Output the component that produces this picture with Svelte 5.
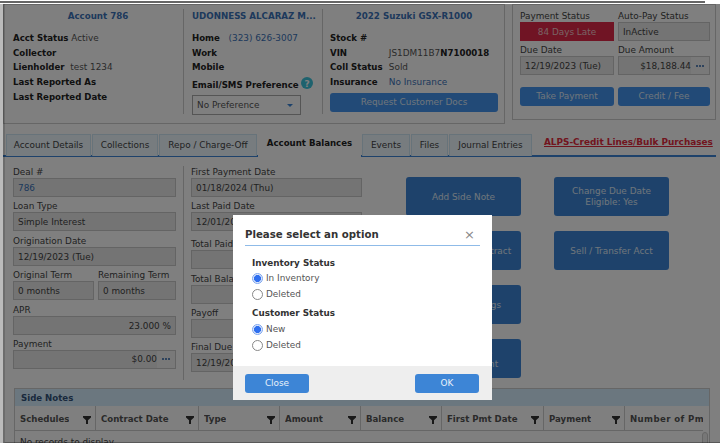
<script>
  const tabs = ['Account Details', 'Collections', 'Repo / Charge-Off', 'Account Balances', 'Events', 'Files', 'Journal Entries'];
  const cols = [
    ['Schedules', 81], ['Contract Date', 103], ['Type', 81], ['Amount', 81], ['Balance', 81],
    ['First Pmt Date', 102], ['Payment', 81], ['Number of Pmts', 78]
  ];
</script>

{#snippet dots()}
  <span class="dots"><i></i><i></i><i></i></span>
{/snippet}

<div class="page">
  <div class="topline"></div>
  <div class="top">
    <section class="summary">
      <div class="col c1">
        <h3>Account 786</h3>
        <p><b>Acct Status</b> <span class="dim">Active</span></p>
        <p><b>Collector</b></p>
        <p><b>Lienholder</b> <span class="dim">&nbsp;test 1234</span></p>
        <p><b>Last Reported As</b></p>
        <p><b>Last Reported Date</b></p>
      </div>
      <div class="col c2">
        <h3 class="left">UDONNESS ALCARAZ M...</h3>
        <p><b>Home</b> <span class="link phone">&nbsp;(323) 626-3007</span></p>
        <p><b>Work</b></p>
        <p><b>Mobile</b></p>
        <p class="pref"><b>Email/SMS Preference</b>
          <svg class="help" width="12" height="12" viewBox="0 0 12 12"><circle cx="6" cy="6" r="6" fill="#3dc4dc"/><text x="6" y="9.5" text-anchor="middle" font-size="9" font-weight="700" fill="#fff" font-family="DejaVu Sans">?</text></svg>
        </p>
        <div class="select">No Preference <span class="caret"></span></div>
      </div>
      <div class="col c3">
        <h3>2022 Suzuki GSX-R1000</h3>
        <p><b class="k">Stock #</b></p>
        <p><b class="k">VIN</b> <span class="dim">JS1DM11B7<b>N7100018</b></span></p>
        <p><b class="k">Coll Status</b> <span class="dim">Sold</span></p>
        <p><b class="k">Insurance</b> <span class="link">No Insurance</span></p>
        <div class="btn wide topbtn">Request Customer Docs</div>
      </div>
    </section>
    <section class="pay">
      <div class="paygrid">
        <div><label>Payment Status</label><div class="field red">84 Days Late</div></div>
        <div><label>Auto-Pay Status</label><div class="field">InActive</div></div>
        <div><label>Due Date</label><div class="field">12/19/2023 (Tue)</div></div>
        <div><label>Due Amount</label><div class="field right withdots"><span>$18,188.44</span>{@render dots()}</div></div>
      </div>
      <div class="paybtns">
        <div class="btn topbtn">Take Payment</div>
        <div class="btn topbtn">Credit / Fee</div>
      </div>
    </section>
  </div>

  <nav class="tabs">
    {#each tabs as t, i}
      <span class="tab t{i}" class:active={i === 3}>{t}</span>
    {/each}
    <a class="alps" href="#alps">ALPS-Credit Lines/Bulk Purchases</a>
  </nav>

  <div class="content">
    <div class="forms">
      <div class="fcol left">
        <div class="f"><label>Deal #</label><div class="field link">786</div></div>
        <div class="f"><label>Loan Type</label><div class="field">Simple Interest</div></div>
        <div class="f"><label>Origination Date</label><div class="field">12/19/2023 (Tue)</div></div>
        <div class="two">
          <div class="f"><label>Original Term</label><div class="field">0 months</div></div>
          <div class="f"><label>Remaining Term</label><div class="field">0 months</div></div>
        </div>
        <div class="f"><label>APR</label><div class="field right">23.000 %</div></div>
        <div class="f"><label>Payment</label><div class="field right withdots"><span>$0.00</span>{@render dots()}</div></div>
      </div>
      <div class="fcol mid">
        <div class="f"><label>First Payment Date</label><div class="field">01/18/2024 (Thu)</div></div>
        <div class="f"><label>Last Paid Date</label><div class="field">12/01/2023 (Fri)</div></div>
        <div class="f g"><label>Total Paid</label><div class="field"></div></div>
        <div class="f"><label>Total Balance</label><div class="field"></div></div>
        <div class="f"><label>Payoff</label><div class="field"></div></div>
        <div class="f"><label>Final Due Date</label><div class="field">12/19/2023 (Tue)</div></div>
      </div>
      <div class="actions">
        <div class="btn big">Add Side Note</div>
        <div class="btn big">Change Due Date<br />Eligible: Yes</div>
        <div class="btn big">View Signed Contract</div>
        <div class="btn big">Sell / Transfer Acct</div>
        <div class="btn big">Account Settings</div>
        <div class="spacer"></div>
        <div class="btn big">Add Late Fee<br />Fee Adjustment</div>
      </div>
    </div>

    <div class="notes">
      <div class="noteshead">Side Notes</div>
      <div class="gridhead">
        {#each cols as [name, w]}
          <div class="th" style="width:{w}px">
            <span>{name}</span>
            <svg width="8" height="8" viewBox="0 0 8 8"><path d="M0 0h8v1.6L5 4.2V8H3V4.2L0 1.6z" fill="#333"/></svg>
          </div>
        {/each}
      </div>
      <div class="norec">No records to display</div>
      <div class="scroll"></div>
    </div>
  </div>

  <div class="edge"></div>
  <div class="overlay"></div>

  <div class="modal">
    <div class="mbody">
      <div class="mtitle"><span>Please select an option</span><span class="x">×</span></div>
      <div class="opts">
        <h4>Inventory Status</h4>
        <div class="radio"><span class="r on"></span>In Inventory</div>
        <div class="radio"><span class="r"></span>Deleted</div>
        <h4 class="second">Customer Status</h4>
        <div class="radio"><span class="r on"></span>New</div>
        <div class="radio"><span class="r"></span>Deleted</div>
      </div>
    </div>
    <div class="mfoot">
      <div class="mbtn">Close</div>
      <div class="mbtn">OK</div>
    </div>
  </div>
</div>

<style>
  :global(body) { margin: 0; background: #fff; }
  .page {
    position: relative; width: 720px; height: 446px; overflow: hidden; box-sizing: border-box;
    background: #fff; color: #333; font: 8.9px/14.7px "DejaVu Sans", sans-serif; padding: 4px 4px 0 3px;
  }
  .page * { box-sizing: border-box; }
  b { font-size: 8.6px; }
  h3, h4, p { margin: 0; }
  label { display: block; color: #444; line-height: 12px; }
  .topline { position: absolute; left: 0; top: 1px; width: 705px; height: 2px; background: #666; z-index: 5; }

  .top { display: flex; gap: 7px; height: 120px; align-items: flex-start; }
  .summary { display: flex; width: 502px; height: 120px; border: 1px solid #ccc; padding: 4px 0 0; background: #fff; }
  .col { height: 105px; }
  .c1 { width: 180px; padding-left: 9px; border-right: 1px solid #ccc; }
  .c2 { width: 139px; padding-left: 8px; padding-right: 0; border-right: 1px solid #ccc; }
  .c3 { flex: 1; padding: 0 6px 0 7px; }
  h3 { color: #3a72b8; font-size: 8.7px; font-weight: 700; text-align: center; margin-bottom: 8px; line-height: 14px; }
  h3.left { text-align: left; white-space: nowrap; }
  .c1 b, .c2 b, .c3 b { color: #222; }
  p { white-space: nowrap; }
  .dim { color: #555; }
  .link, .field.link { color: #3a72b8; }
  .phone { margin-left: 3px; }
  .k { display: inline-block; width: 56px; }
  .pref { margin-top: 3px; display: flex; align-items: center; gap: 2px; }
  .help { flex: none; margin-top: -4px; }
  .select { margin-top: 2px; width: 109px; height: 20px; border: 1px solid #aaa; padding: 2px 4px; color: #555; position: relative; background: #fff; }
  .caret { position: absolute; right: 7px; top: 8px; border: 3px solid transparent; border-top-color: #3d85d6; border-bottom: 0; }
  .btn { background: #3d85d6; color: #dfeaf7; border-radius: 3px; display: flex; align-items: center; justify-content: center; text-align: center; }
  .btn.topbtn { background: #4494ee; }
  .wide { height: 19px; margin-top: 3px; }

  .pay { width: 204px; height: 116px; border: 1px solid #ccc; padding: 5px 5px 0 7px; background: #fff; }
  .paygrid { display: grid; grid-template-columns: 94px 92px; gap: 3px 4px; }
  .field { height: 19px; border: 1px solid #c8c8c8; background: #e8e8e8; color: #444; padding: 2px 4px; line-height: 14px; white-space: nowrap; overflow: hidden; }
  .field.red { background: #e02848; border-color: #e02848; color: #f3c6c8; text-align: center; }
  .field.right { text-align: right; }
  .withdots { display: flex; padding: 0 0 0 4px; justify-content: flex-end; align-items: center; }
  .withdots span:first-child { flex: 1; }
  .dots { width: 18px; height: 100%; background: #f2f2f2; display: flex; align-items: center; justify-content: center; gap: 1px; }
  .dots i { width: 2px; height: 2px; border-radius: 50%; background: #2b62a8; }
  .paybtns { display: grid; grid-template-columns: 94px 92px; gap: 4px; margin-top: 12px; }
  .paybtns .btn { height: 19px; }

  .tabs { display: flex; height: 23px; margin-top: 10px; padding-left: 3px; border-bottom: 2px solid #3d85d6; position: relative; align-items: flex-end; width: 713px; }
  .tab { height: 22px; border: 1px solid #cfe6f4; border-bottom: 0; background: #eef8ff; padding: 3px 0 0; text-align: center; color: #444; margin-right: 1px; margin-bottom: -1px; }
  .t0 { width: 85px; } .t1 { width: 66px; } .t2 { width: 98px; } .t3 { width: 103px; } .t4 { width: 48px; } .t5 { width: 37px; } .t6 { width: 83px; }
  .tab.active { background: #fff; border-color: #fff; font-weight: 700; font-size: 8.6px; color: #222; height: 25px; margin-bottom: -2px; z-index: 1; }
  .alps { color: #e32a3c; font-weight: 700; font-size: 8.9px; margin-left: 11px; align-self: flex-start; margin-top: 1px; white-space: nowrap; }

  .content { padding: 9px 0 0 10px; }
  .forms { display: flex; height: 222px; }
  .fcol { display: flex; flex-direction: column; }
  .fcol.left { height: 214px; gap: 3.4px; padding-right: 7px; border-right: 1px solid #ccc; width: 171px; }
  .fcol.mid { width: 171px; gap: 3.4px; margin-left: 7px; }
  .f.g { margin-top: 3.5px; }
  .two { display: grid; grid-template-columns: 81px 78px; gap: 4px; }
  .actions { display: grid; grid-template-columns: 115px 115px; column-gap: 33px; row-gap: 15px; grid-auto-rows: 39px; margin: 11px 0 0 44px; }
  .btn.big { height: 39px; line-height: 11px; padding-top: 1px; }

  .notes { width: 696px; margin-left: 1px; border: 1px solid #ccc; border-bottom: 0; position: relative; height: 55px; overflow: hidden; }
  .noteshead { height: 17px; background: #d6eeff; color: #33537a; font-weight: 700; font-size: 8.6px; padding: 2px 6px 0; line-height: 15px; }
  .gridhead { display: flex; height: 25px; border-bottom: 1px solid #ccc; width: 688px; }
  .th { display: flex; align-items: center; justify-content: space-between; padding: 3px 4px 0 5px; border-right: 1px solid #ccc; font-weight: 700; font-size: 8.6px; color: #555; white-space: nowrap; overflow: hidden; flex: none; }
  .th svg { flex: none; }
  .th span { overflow: hidden; }
  .th:last-child { border-right: 0; padding-right: 0; letter-spacing: .4px; }
  .th:last-child svg { display: none; }
  .norec { padding: 4px 5px; color: #444; }
  .scroll { position: absolute; right: 1px; top: 43px; width: 6px; height: 20px; border: 1px solid #ccc; border-radius: 3px; background: #eee; }

  .edge { position: absolute; left: 0; top: 4px; bottom: 3px; width: 3px; background: #bbb; z-index: 2; }
  .overlay { position: absolute; left: 3px; top: 4px; right: 0; bottom: 3px; background: rgba(0, 0, 0, .5); border-left: 2px solid rgba(0, 0, 0, .15); border-bottom: 1px solid rgba(0, 0, 0, .3); z-index: 2; }

  .modal { position: absolute; left: 233px; top: 215px; width: 259px; height: 185px; background: #fff; z-index: 3; display: flex; flex-direction: column; }
  .mbody { flex: 1; padding: 9px 12px 0; }
  .mtitle { display: flex; justify-content: space-between; align-items: center; height: 22px; padding-top: 2px; border-bottom: 1px solid #8fbbe8; font-size: 10.2px; font-weight: 700; color: #333; padding-right: 5px; }
  .x { color: #888; font-weight: 400; font-size: 13px; }
  .opts { padding: 10px 0 0 7px; }
  h4 { font-size: 8.8px; font-weight: 700; color: #333; line-height: 14px; margin-bottom: 0; }
  h4.second { margin-top: 4px; margin-bottom: 1px; }
  .radio { display: flex; align-items: center; gap: 3px; height: 16px; color: #555; }
  .r { width: 11px; height: 11px; border-radius: 50%; border: 1px solid #888; background: #fff; flex: none; }
  .r.on { border: 1px solid #7ea6ef; background: radial-gradient(circle, #2f6fef 0 3.2px, #dfe9fb 3.8px); }
  .mfoot { height: 34px; background: #eee; display: flex; justify-content: space-between; padding: 8px 13px 0 12px; }
  .mbtn { width: 64px; height: 19px; background: #3d85d6; border-radius: 3px; color: #e8f1fb; display: flex; align-items: center; justify-content: center; }
</style>
